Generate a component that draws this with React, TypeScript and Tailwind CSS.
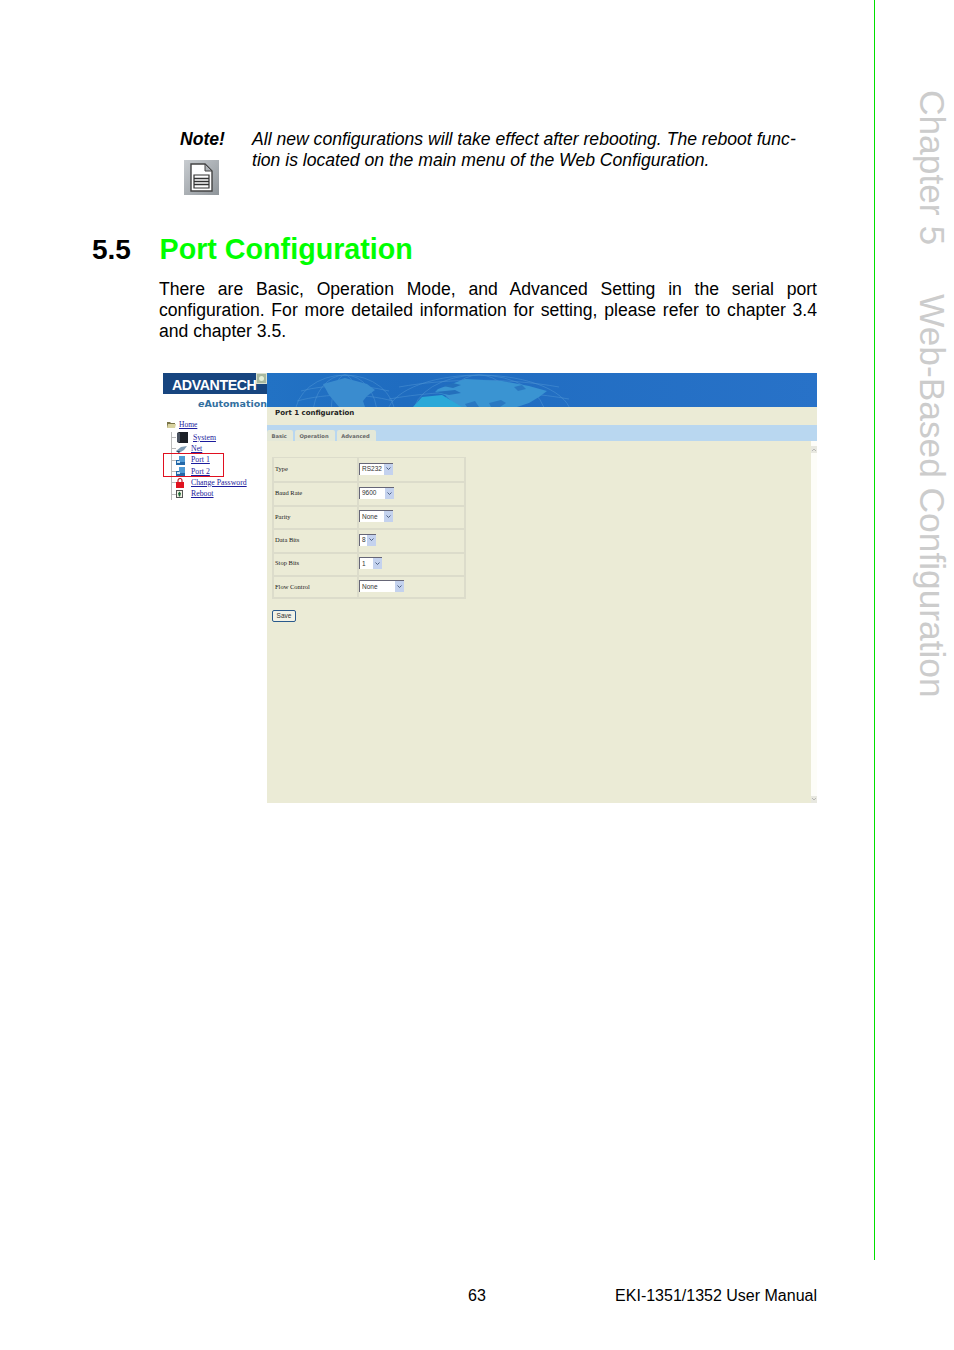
import React from "react";

const treeItems = [
  { label: "System", icon: "system", gap: "ml-[5px]" },
  { label: "Net", icon: "net", gap: "ml-[4px]" },
  { label: "Port 1", icon: "port", gap: "ml-[6px]" },
  { label: "Port 2", icon: "port", gap: "ml-[6px]" },
  { label: "Change Password", icon: "lock", gap: "ml-[7px]" },
  { label: "Reboot", icon: "reboot", gap: "ml-[8px]" },
];

const portFields = [
  { label: "Type", value: "RS232", width: "w-[34px]" },
  { label: "Baud Rate", value: "9600", width: "w-[35px]" },
  { label: "Parity", value: "None", width: "w-[34px]" },
  { label: "Data Bits", value: "8", width: "w-[17px]" },
  { label: "Stop Bits", value: "1", width: "w-[23px]" },
  { label: "Flow Control", value: "None", width: "w-[45px]" },
];

const tabs = ["Basic", "Operation", "Advanced"];

function TreeIcon({ kind }: { kind: string }) {
  if (kind === "system") {
    return (
      <svg width="12" height="11" viewBox="0 0 12 11">
        <path d="M1 1l2-1h9v11H3l-2-1z" fill="#1c2026" />
        <rect x="1" y="1" width="3" height="9" fill="#4a5260" />
      </svg>
    );
  }
  if (kind === "net") {
    return (
      <svg width="11" height="8" viewBox="0 0 11 8">
        <path d="M0 6l5-4 6-1-3 4-5 3z" fill="#7f9cb4" />
        <path d="M0 6l3 2 1-2z" fill="#2c4a68" />
      </svg>
    );
  }
  if (kind === "port") {
    return (
      <svg width="9" height="9" viewBox="0 0 9 9">
        <rect x="0" y="4" width="9" height="5" fill="#2468a8" />
        <path d="M3 0h6v6H3z" fill="#4f9ad4" />
        <rect x="1" y="5" width="3" height="2" fill="#c8e0f2" />
      </svg>
    );
  }
  if (kind === "lock") {
    return (
      <svg width="8" height="10" viewBox="0 0 8 10">
        <path d="M2 4V2.5a2 2 0 0 1 4 0V4" fill="none" stroke="#c0202c" strokeWidth="1.2" />
        <rect x="0" y="4" width="8" height="6" fill="#e0121f" />
      </svg>
    );
  }
  return (
    <svg width="7" height="8" viewBox="0 0 7 8">
      <rect x="0.5" y="0.5" width="6" height="7" fill="#f2f2e4" stroke="#555" />
      <path d="M2 3.5l1.5-2 1.5 2-1 3H3z" fill="#1f6a3a" />
    </svg>
  );
}

function NoteIcon() {
  return (
    <div className="w-[35px] h-[35px] bg-gradient-to-br from-[#c8ccd0] to-[#8f959a] flex items-center justify-center">
      <svg width="23" height="29" viewBox="0 0 23 29">
        <path d="M1 1h14l7 7v20H1z" fill="#fff" stroke="#444" strokeWidth="1.4" />
        <path d="M15 1v7h7z" fill="#b0b4b8" stroke="#444" strokeWidth="1" />
        <path d="M4 12h15v13H4z" fill="#fff" stroke="#333" strokeWidth="1.2" />
        <path d="M4 15.5h15M4 18.5h15M4 21.5h15" stroke="#333" strokeWidth="1.3" />
      </svg>
    </div>
  );
}

function Banner() {
  return (
    <div className="h-[34px] bg-[#2872c8] overflow-hidden">
      <svg width="550" height="34" viewBox="0 0 550 34" className="block">
        <defs>
          <linearGradient id="fade" x1="0" x2="1" y1="0" y2="0">
            <stop offset="0" stopColor="#2272c4" />
            <stop offset="0.25" stopColor="#1f6cc0" />
            <stop offset="1" stopColor="#2872c8" />
          </linearGradient>
        </defs>
        <rect width="550" height="34" fill="url(#fade)" />
        <g fill="none" stroke="#5ea2dc" strokeWidth="0.6" opacity="0.65">
          <ellipse cx="78" cy="42" rx="50" ry="40" />
          <ellipse cx="78" cy="42" rx="32" ry="40" />
          <ellipse cx="78" cy="42" rx="14" ry="40" />
          <path d="M30 28c30-8 66-8 96 0M34 18c26-7 60-7 88 0" />
          <ellipse cx="212" cy="42" rx="92" ry="40" />
          <ellipse cx="212" cy="42" rx="66" ry="40" />
          <ellipse cx="212" cy="42" rx="36" ry="40" />
          <path d="M122 26c56-10 124-10 180 0M132 14c50-9 110-9 160 0" />
        </g>
        <path d="M56 11l22-6 22 6 8 6-8 6-4 5 2 6H72L62 22z" fill="#3a8ccf" />
        <path d="M171 16l27-10 37 2 27 5 18 5-8 6-10 6-12 4h-60l-12-12-10-3z" fill="#3a94d2" />
        <path d="M176 13l10-3 8 2-8 3zM168 19l20-2 6 3-12 2z" fill="#2470bc" />
        <path d="M146 34l9-10 20-2 20 12z" fill="#2aa8d8" />
        <path d="M198 31l10-3 4 6h-12zM222 30l12-3 5 3-6 4h-9zM247 14l8-2 4 4-8 2z" fill="#2a78c2" />
      </svg>
    </div>
  );
}

function LeftMenu() {
  return (
    <div className="w-[104px] shrink-0 relative" style={{ fontFamily: '"Liberation Serif", serif' }}>
      <div className="h-[21px] pt-[3px] bg-[#17457f] flex items-center pl-[9px] relative">
        <span
          className="text-[14.2px] leading-none font-bold tracking-[-0.4px] text-white"
          style={{ fontFamily: '"Liberation Sans", sans-serif' }}
        >
          ADVANTECH
        </span>
        <span className="absolute right-0 top-0 w-[11px] h-[11px] bg-[#a8b8a0] border border-[#d8e0d0] flex items-center justify-center">
          <span className="w-[5px] h-[5px] rounded-full bg-[#e4f0d8]" />
        </span>
      </div>
      <div
        className="h-[14px] pt-[3px] text-right text-[9.5px] leading-[14px] font-bold text-[#33709f] whitespace-nowrap"
        style={{ fontFamily: '"DejaVu Sans", sans-serif' }}
      >
        <i>e</i>Automation
      </div>
      <div className="mt-[11px] flex flex-col">
        <div className="h-[11.5px] ml-[4px] flex items-center">
          <svg width="9" height="8" viewBox="0 0 9 8">
            <path d="M0 1h3l1 1h4v5H0z" fill="#7a7448" />
            <path d="M1 3h8L8 7H0z" fill="#d8d2a0" />
          </svg>
          <span className="ml-[3px] text-[7.5px] leading-none text-[#1c1c9c] underline">Home</span>
        </div>
        <div className="mt-[1.5px] ml-[8px] border-l border-[#bbb]">
          {treeItems.map((item) => (
            <div key={item.label} className="h-[11.3px] flex items-center">
              <span className="w-[4px] h-px bg-[#bbb] shrink-0" />
              <TreeIcon kind={item.icon} />
              <span className={`${item.gap} text-[7.8px] leading-none text-[#1c1c9c] underline whitespace-nowrap`}>
                {item.label}
              </span>
            </div>
          ))}
        </div>
      </div>
      <div className="absolute left-0 top-[80px] w-[61px] h-[24px] border border-[#e01020]" />
    </div>
  );
}

function PortScreenshot() {
  return (
    <div className="ml-[163px] w-[654px] h-[430px] flex bg-white">
      <LeftMenu />

      {/* Right content */}
      <div className="flex-1 flex flex-col">
        <Banner />
        <div className="flex-1 flex flex-col bg-[#ebebd6]" style={{ fontFamily: '"DejaVu Sans", sans-serif' }}>
          <div className="h-[18px] pl-[8px] pt-[1px] text-[7px] leading-[10px] font-bold text-[#222]">Port 1 configuration</div>
          <div className="h-[16px] bg-[#b9d7f0] flex items-end gap-[2px]">
            {tabs.map((tab) => (
              <div key={tab} className="h-[11px] pl-[4.5px] pr-[6px] bg-[#e4e8d8] rounded-t-[2px] text-[5.2px] leading-[12px] font-bold text-[#666]">
                {tab}
              </div>
            ))}
          </div>
          <div className="flex-1 flex">
            <div className="flex-1 pl-[5px] pt-[16px]">
              <div className="w-[194px] border-t border-x-2 border-b-2 border-[#dcdccb] flex flex-col">
                {portFields.map((field, i) => (
                  <div
                    key={field.label}
                    className={`flex ${i > 0 ? "border-t-2 border-[#dcdccb]" : ""} ${i === 5 ? "h-[22px]" : "h-[23.4px]"}`}
                  >
                    <div
                      className={`w-[83px] pl-[1px] flex items-center text-[6.5px] text-[#222] ${i === 5 ? "pb-px" : "pb-[2px]"}`}
                      style={{ fontFamily: '"Liberation Serif", serif' }}
                    >
                      {field.label}
                    </div>
                    <div className={`flex-1 border-l-2 border-[#dcdccb] flex items-center ${i === 5 ? "pb-px" : "pb-[2px]"}`}>
                      <div className={`${field.width} h-[12px] bg-white border-l border-t border-[#667] flex items-center justify-between`}>
                        <span
                          className="pl-[2px] text-[6.5px] leading-none text-[#333]"
                          style={{ fontFamily: '"Liberation Sans", sans-serif' }}
                        >
                          {field.value}
                        </span>
                        <span className="w-[9px] h-full bg-[#c4d2ee] flex items-center justify-center">
                          <svg width="5" height="4" viewBox="0 0 5 4">
                            <path d="M0.5 0.5l2 2 2-2" fill="none" stroke="#4d6185" strokeWidth="1" />
                          </svg>
                        </span>
                      </div>
                    </div>
                  </div>
                ))}
              </div>
              <button
                className="mt-[11px] block w-[24px] h-[12px] bg-[#f2f2e6] border border-[#2a5a8c] rounded-[2px] text-[6.5px] leading-none text-[#333]"
                style={{ fontFamily: '"Liberation Sans", sans-serif' }}
              >
                Save
              </button>
            </div>
            {/* Scrollbar */}
            <div className="w-[6px] bg-[#fdfdf8] flex flex-col justify-between pt-[5px]">
              <div className="h-[7px] bg-[#e8e8e0] flex items-center justify-center">
                <svg width="4" height="3" viewBox="0 0 4 3">
                  <path d="M0 3l2-2 2 2" fill="none" stroke="#aaa" strokeWidth="0.8" />
                </svg>
              </div>
              <div className="h-[7px] bg-[#e8e8e0] flex items-center justify-center">
                <svg width="4" height="3" viewBox="0 0 4 3">
                  <path d="M0 0l2 2 2-2" fill="none" stroke="#aaa" strokeWidth="0.8" />
                </svg>
              </div>
            </div>
          </div>
        </div>
      </div>
    </div>
  );
}

export default function App() {
  return (
    <div className="w-[954px] h-[1350px] bg-white flex overflow-hidden text-black" style={{ fontFamily: '"Liberation Sans", Arial, sans-serif' }}>
      <div className="w-[874px] shrink-0 flex flex-col">
        {/* Note */}
        <div className="pt-[129px] pl-[180px] flex">
          <div className="w-[72px] shrink-0">
            <div className="text-[17.6px] leading-[21px] font-bold italic">Note!</div>
            <div className="mt-[10px] ml-[4px]">
              <NoteIcon />
            </div>
          </div>
          <p className="text-[17.6px] leading-[21px] italic whitespace-nowrap">
            All new configurations will take effect after rebooting. The reboot func-
            <br />
            tion is located on the main menu of the Web Configuration.
          </p>
        </div>

        {/* Section heading */}
        <div className="mt-[36px] pl-[92px] flex items-baseline h-[36px]">
          <span className="w-[67.5px] text-[28px] leading-[36px] font-bold">5.5</span>
          <h1 className="text-[28.7px] leading-[36px] font-bold text-[#00ff00]">Port Configuration</h1>
        </div>

        <p className="mt-[12px] ml-[159px] w-[658px] text-[17.6px] leading-[21px] text-justify">
          There are Basic, Operation Mode, and Advanced Setting in the serial port configuration. For more detailed
          information for setting, please refer to chapter 3.4 and chapter 3.5.
        </p>

        <div className="mt-[31px]">
          <PortScreenshot />
        </div>

        {/* Footer */}
        <div className="mt-[483px] ml-[468px] w-[349px] flex justify-between text-[16px] leading-[20px]">
          <span>63</span>
          <span>EKI-1351/1352 User Manual</span>
        </div>
      </div>

      {/* Chapter rail */}
      <div className="w-[80px] h-[1260px] border-l border-[#00e000]">
        <div className="pl-[39px] pt-[90px] flex">
          <span className="[writing-mode:vertical-rl] text-[35.3px] leading-[37px] text-[#cccccc] whitespace-pre">
            Chapter 5     Web-Based Configuration
          </span>
        </div>
      </div>
    </div>
  );
}
